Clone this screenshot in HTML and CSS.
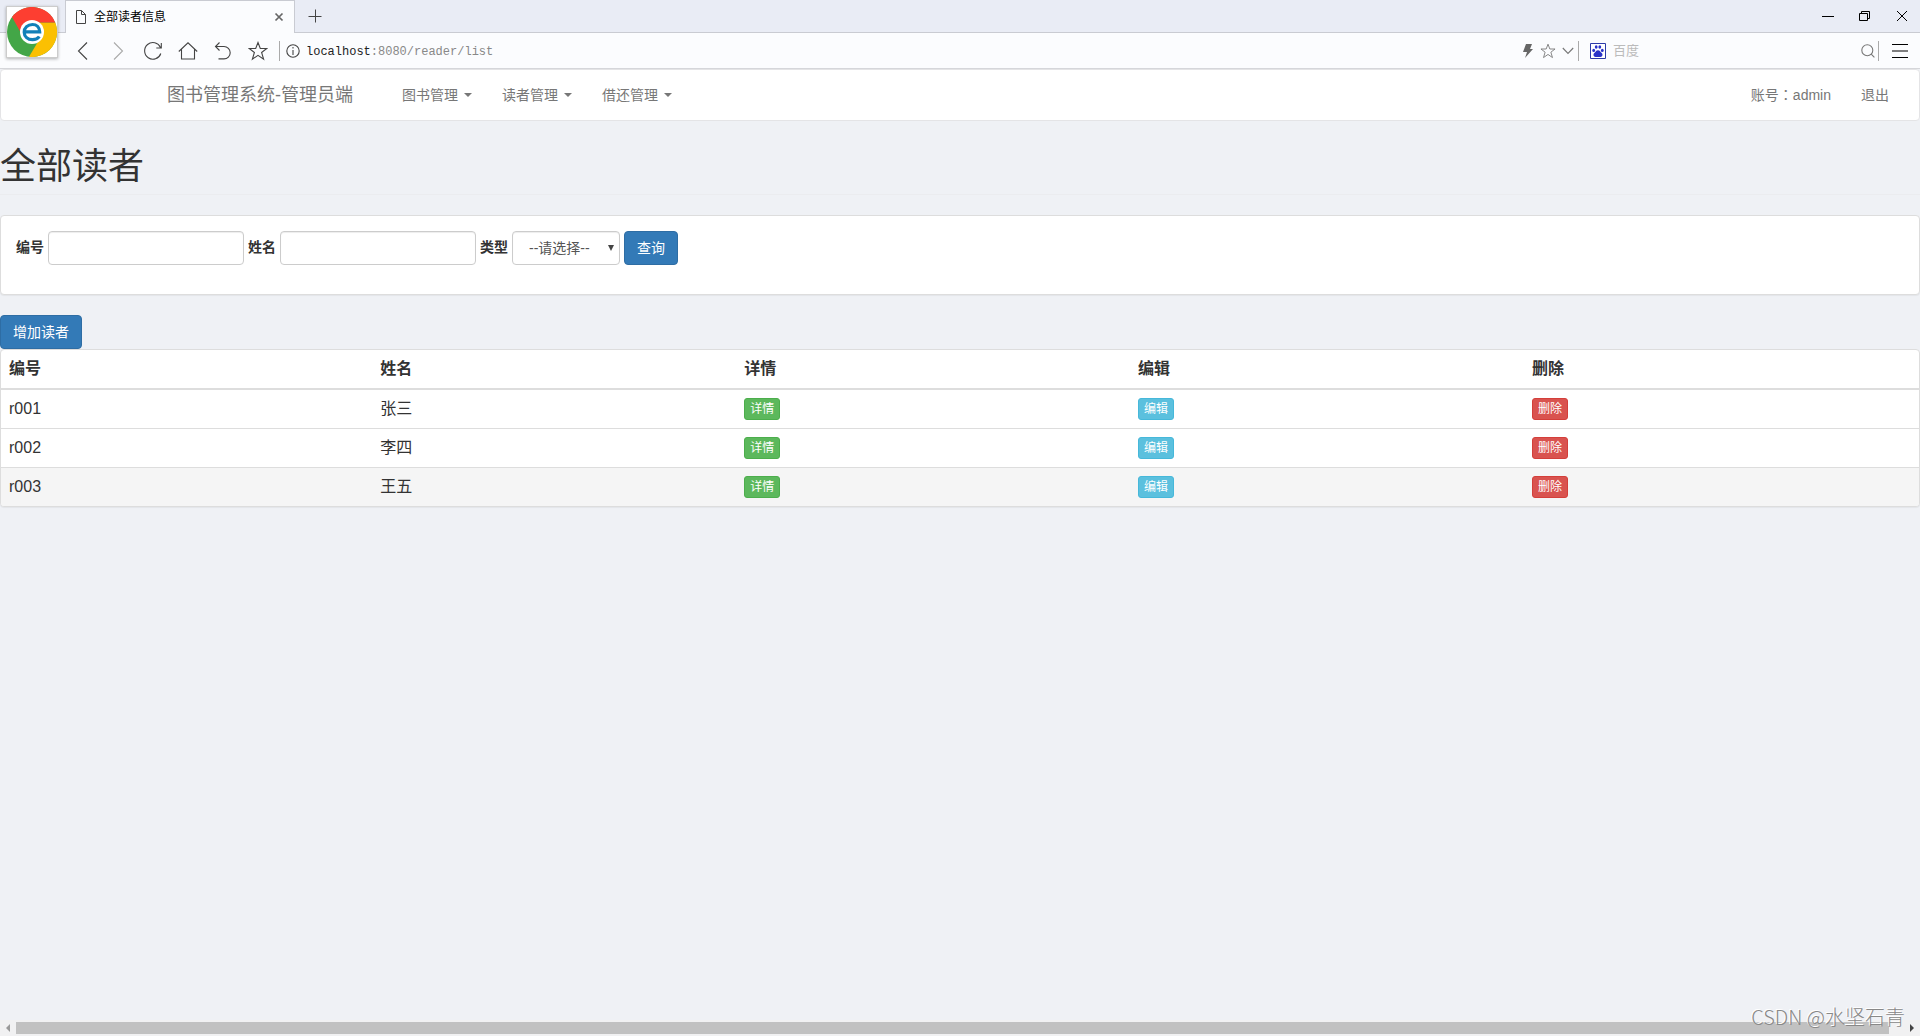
FILE: index.html
```html
<!DOCTYPE html>
<html lang="zh-CN">
<head>
<meta charset="utf-8">
<title>全部读者信息</title>
<link rel="stylesheet" href="styles.css">
</head>
<body>
<header class="browser">
  <div class="tab-strip">
    <div class="tab">
      <svg class="tab-page" width="10" height="14" viewBox="0 0 10 14"><path d="M.5.5h5l4 4v9h-9zM5.500.5v4h4"/></svg>
      <span class="tab-title">全部读者信息</span>
      <button class="tab-close" aria-label="关闭标签"><svg width="10" height="10" viewBox="0 0 10 10"><path d="M1.500 1.500l7 7M8.500 1.500l-7 7"/></svg></button>
    </div>
    <button class="tab-new" aria-label="新标签"><svg width="14" height="14" viewBox="0 0 14 14"><path d="M.5 7.500h13M7.500.5v13"/></svg></button>
    <div class="window-buttons">
      <button aria-label="最小化"><svg width="14" height="14" viewBox="0 0 14 14"><path d="M1 7.500h12"/></svg></button>
      <button aria-label="还原"><svg width="14" height="14" viewBox="0 0 14 14"><path d="M1.500 4.500h8v7h-8zM3.500 4V2.500h8v7H10"/></svg></button>
      <button aria-label="关闭"><svg width="14" height="14" viewBox="0 0 14 14"><path d="M2 2l10 10M12 2L2 12"/></svg></button>
    </div>
  </div>
  <div class="toolbar">
    <div class="tools">
      <button aria-label="后退"><svg width="20" height="20" viewBox="0 0 20 20"><path d="M14 1.500L5.500 10l8.500 8.500"/></svg></button>
      <button class="faded" aria-label="前进"><svg width="20" height="20" viewBox="0 0 20 20"><path d="M6 1.500l8.500 8.500L6 18.500"/></svg></button>
      <button aria-label="刷新"><svg width="20" height="20" viewBox="0 0 20 20"><path d="M17.800 12.500A8.300 8.300 0 1 1 17.500 6.500M18.300 2v5h-5"/></svg></button>
      <button aria-label="主页"><svg width="20" height="20" viewBox="0 0 20 20"><path d="M.8 10.500L10 1.800l9.200 8.700M3.500 8.500v9.500h13V8.500"/></svg></button>
      <button aria-label="恢复"><svg width="20" height="20" viewBox="0 0 20 20"><path d="M6.500 1.500L2.500 5.500l4 4M2.500 5.500h8.500a6.200 6.200 0 0 1 0 12.400H5.500"/></svg></button>
      <button aria-label="收藏"><svg width="20" height="20" viewBox="0 0 20 20"><path d="M10 1.500l2.300 6h6.500l-5.200 4 2 6.700L10 14.300l-5.600 3.900 2-6.700-5.200-4h6.500z"/></svg></button>
    </div>
    <div class="address">
      <svg width="14" height="14" viewBox="0 0 14 14"><circle cx="7" cy="7" r="6.200"/><path d="M7 6v5M7 3v1.600"/></svg>
      <div class="url">localhost<span class="url-path">:8080/reader/list</span></div>
    </div>
    <div class="address-tools">
      <button aria-label="极速模式"><svg class="bolt" width="10" height="14" viewBox="0 0 10 14"><path d="M3 0h6L7 5h3L2 14l2-6H0z"/></svg></button>
      <button aria-label="收藏网页"><svg width="16" height="16" viewBox="0 0 20 20"><path d="M10 1.500l2.300 6h6.500l-5.200 4 2 6.700L10 14.300l-5.600 3.900 2-6.700-5.200-4h6.500z"/></svg></button>
      <button aria-label="展开"><svg width="12" height="8" viewBox="0 0 12 8"><path d="M.8 1L6 6.500 11.200 1"/></svg></button>
    </div>
    <div class="search">
      <svg class="paw" width="16" height="16" viewBox="0 0 16 16"><path class="paw-frame" d="M.5.5h15v15H.5z"/><ellipse cx="3.700" cy="7.400" rx="1.400" ry="1.700"/><ellipse cx="6.200" cy="4" rx="1.400" ry="1.800"/><ellipse cx="9.800" cy="4" rx="1.400" ry="1.800"/><ellipse cx="12.300" cy="7.400" rx="1.400" ry="1.700"/><path d="M8 7.200c2 0 2.300 1.800 3.700 2.900 1.500 1.300.8 3.900-1.200 3.900H5.500c-2 0-2.700-2.600-1.200-3.900C5.700 9 6 7.200 8 7.200z"/></svg>
      <input class="search-box" type="text" placeholder="百度" aria-label="搜索">
      <button aria-label="搜索"><svg width="14" height="14" viewBox="0 0 14 14"><circle cx="6.300" cy="6.300" r="5.500"/><path d="M10.200 10.200l3.200 3.200"/></svg></button>
    </div>
    <button class="menu" aria-label="菜单"><svg width="16" height="14" viewBox="0 0 16 14"><path d="M0 .5h16M0 7h16M0 13.500h16"/></svg></button>
  </div>
  <div class="logo">
    <svg width="50" height="50" viewBox="0 0 50 50">
      <circle cx="25" cy="25" r="25" fill="#43a647"/>
      <path d="M25 25L27 15.500H48.200A25 25 0 0 1 22 49.800L32 33z" fill="#fbc002"/>
      <path d="M25 25L14 26 5 10A25 25 0 0 1 48.200 15.500H27z" fill="#fd3e31"/>
      <circle cx="25" cy="25" r="12" fill="#fff"/>
      <path class="logo-mark" d="M17 24.800h15.700C32.500 20 29.500 17.500 25.500 17.500c-4.800 0-8.300 3.300-8.300 7.700s3.500 7.500 8.300 7.500c3 0 5.500-1.200 6.800-3.200"/>
    </svg>
  </div>
</header>

<nav class="navbar">
  <a class="brand" href="#">图书管理系统-管理员端</a>
  <div class="nav-menu">
    <a href="#">图书管理<span class="caret"></span></a>
    <a href="#">读者管理<span class="caret"></span></a>
    <a href="#">借还管理<span class="caret"></span></a>
  </div>
  <div class="nav-user">
    <a href="#"><span>账号<span class="colon" lang="zh-TW">：</span>admin</span></a>
    <a href="#">退出</a>
  </div>
</nav>

<main class="page">
  <h1 class="page-title">全部读者</h1>
  <form class="panel filter">
    <label for="reader-id">编号</label>
    <input class="field" id="reader-id" type="text">
    <label for="reader-name">姓名</label>
    <input class="field" id="reader-name" type="text">
    <label for="reader-type">类型</label>
    <div class="select-wrap">
      <select class="field" id="reader-type"><option>--请选择--</option></select>
    </div>
    <button class="btn btn-primary" type="button">查询</button>
  </form>
  <button class="btn btn-primary" type="button">增加读者</button>
  <div class="panel list">
    <table class="readers">
      <colgroup><col class="col-id"><col class="col-name"><col class="col-action"><col class="col-action"><col></colgroup>
      <thead>
        <tr><th>编号</th><th>姓名</th><th>详情</th><th>编辑</th><th>删除</th></tr>
      </thead>
      <tbody>
        <tr><td>r001</td><td>张三</td><td><button class="btn btn-xs btn-success">详情</button></td><td><button class="btn btn-xs btn-info">编辑</button></td><td><button class="btn btn-xs btn-danger">删除</button></td></tr>
        <tr><td>r002</td><td>李四</td><td><button class="btn btn-xs btn-success">详情</button></td><td><button class="btn btn-xs btn-info">编辑</button></td><td><button class="btn btn-xs btn-danger">删除</button></td></tr>
        <tr class="active"><td>r003</td><td>王五</td><td><button class="btn btn-xs btn-success">详情</button></td><td><button class="btn btn-xs btn-info">编辑</button></td><td><button class="btn btn-xs btn-danger">删除</button></td></tr>
      </tbody>
    </table>
  </div>
</main>

<div class="scrollbar">
  <svg class="arrow-left" width="4" height="8" viewBox="0 0 4 8"><path d="M4 0v8L0 4z"/></svg>
  <div class="thumb"></div>
  <svg class="arrow-right" width="4" height="8" viewBox="0 0 4 8"><path d="M0 0v8l4-4z"/></svg>
</div>
<div class="watermark">CSDN @水坚石青</div>
</body>
</html>
```
FILE: styles.css
```css
* { box-sizing: border-box; }

body {
  margin: 0;
  min-height: 100vh;
  display: flex;
  flex-direction: column;
  position: relative;
  background: #eff1f5;
  color: #333;
  font: 14px/20px "Liberation Sans", "Noto Sans CJK SC", sans-serif;
}

button, input, select { font: inherit; color: inherit; }
a { color: inherit; text-decoration: none; }
svg { display: block; flex: none; fill: none; stroke: #444; stroke-width: 1.1; }

/* Browser window */
.browser { position: relative; }
.browser button {
  display: flex;
  align-items: center;
  justify-content: center;
  padding: 0;
  border: 0;
  background: none;
}

.tab-strip {
  display: flex;
  height: 33px;
  padding-left: 65px;
  background: #e9ecf5;
  border-bottom: 1px solid #c9cbd2;
}
.tab {
  display: flex;
  align-items: center;
  width: 230px;
  height: 33px;
  padding: 0 10px;
  background: #fbfcfe;
  border: 1px solid #c9cbd2;
  border-bottom: 0;
}
.tab-page { stroke-width: 1; }
.tab-title {
  flex: 1;
  padding-left: 8px;
  color: #000;
  font-size: 12px;
}
.tab-close svg { stroke: #666; stroke-width: 1.7; }
.tab-new { width: 39px; }
.tab-new svg { stroke-width: 1; }
.window-buttons {
  display: flex;
  margin-left: auto;
}
.window-buttons button { width: 37px; }
.window-buttons svg { stroke: #000; stroke-width: 1; }

.toolbar {
  display: flex;
  align-items: center;
  height: 36px;
  padding-left: 65px;
  background: #fbfcfe;
  border-bottom: 1px solid #d5d6da;
}
.tools { display: flex; }
.tools button { width: 35px; }
.tools .faded svg { stroke: #aaa; }
.address {
  display: flex;
  flex: 1;
  align-items: center;
  gap: 6px;
  height: 20px;
  margin-left: 4px;
  padding-left: 6px;
  border-left: 1px solid #aaa;
}
.url {
  color: #222;
  font-family: "Liberation Mono", monospace;
  font-size: 12px;
  line-height: 16px;
  padding-top: 2px;
}
.url-path { color: #888; }
.address-tools {
  display: flex;
  align-items: center;
  height: 20px;
  border-right: 1px solid #aaa;
}
.address-tools button { width: 20px; }
.address-tools svg { stroke: #777; }
.address-tools .bolt { fill: #666; stroke: none; }
.search {
  display: flex;
  align-items: center;
  width: 300px;
  height: 20px;
  padding-left: 11px;
  border-right: 1px solid #aaa;
}
.search-box {
  flex: 1;
  min-width: 0;
  padding: 0 7px;
  border: 0;
  background: none;
  font-size: 13px;
}
.search-box::placeholder { color: #bbb; }
.search button { width: 20px; }
.search button svg { stroke: #777; }
.search .paw { fill: #2932c8; stroke: none; }
.search .paw-frame { fill: #fff; stroke: #2c3aa8; stroke-width: 1; }
.menu { width: 41px; }
.menu svg { stroke: #000; stroke-width: 1; }

.logo {
  position: absolute;
  top: 6px;
  left: 6px;
  background: #fff;
  border: 1px solid #ccc;
  box-shadow: 0 1px 3px rgba(0, 0, 0, .3);
}
.logo svg { stroke: none; }
.logo-mark { stroke: #1280b8; stroke-width: 3.2; }

/* Navigation */
.navbar {
  display: flex;
  align-items: center;
  min-height: 52px;
  padding-left: 166px;
  background: #fff;
  border: 1px solid #e4e4e6;
  border-radius: 4px;
  color: #777;
}
.brand { font-size: 18px; }
.nav-menu {
  display: flex;
  padding-left: 34px;
}
.nav-menu a, .nav-user a {
  display: flex;
  align-items: center;
  gap: 6px;
  padding: 15px;
}
.caret {
  border: 4px solid transparent;
  border-top-color: #777;
  border-bottom: 0;
}
.nav-user {
  display: flex;
  margin-left: auto;
  padding-right: 15px;
}
.colon {
  font-family: "Noto Sans CJK TC", sans-serif;
  line-height: 14px;
}

/* Content */
.page { flex: 1; }
.page-title {
  margin: 26px 0 20px;
  padding-bottom: 7px;
  border-bottom: 1px solid #ebecef;
  font-size: 36px;
  font-weight: 400;
  line-height: 40px;
}
.panel {
  background: #fff;
  border: 1px solid #ddd;
  border-radius: 4px;
  box-shadow: 0 1px 1px rgba(0, 0, 0, .05);
}
.filter {
  display: flex;
  align-items: flex-start;
  gap: 4px;
  min-height: 80px;
  margin-bottom: 20px;
  padding: 15px;
}
.filter label {
  font-weight: 700;
  line-height: 32px;
}
.field {
  width: 196px;
  height: 34px;
  padding: 6px 12px;
  background: #fff;
  border: 1px solid #ccc;
  border-radius: 4px;
  box-shadow: inset 0 1px 1px rgba(0, 0, 0, .075);
  color: #555;
}
.select-wrap { position: relative; }
.select-wrap .field {
  display: block;
  width: 108px;
  padding: 6px 16px;
  appearance: none;
}
.select-wrap::after {
  content: "";
  position: absolute;
  top: 14px;
  right: 6px;
  border: 3px solid transparent;
  border-top: 6px solid #444;
  border-bottom: 0;
  pointer-events: none;
}

.btn {
  display: block;
  padding: 6px 12px;
  border: 1px solid;
  border-radius: 4px;
  color: #fff;
}
.btn-primary { background: #337ab7; border-color: #2e6da4; }
.btn-success { background: #5cb85c; border-color: #4cae4c; }
.btn-info { background: #5bc0de; border-color: #46b8da; }
.btn-danger { background: #d9534f; border-color: #d43f3a; }
.btn-xs {
  padding: 1px 5px;
  border-radius: 3px;
  font-size: 12px;
  line-height: 18px;
}

.list { overflow: hidden; }
.readers {
  width: 100%;
  table-layout: fixed;
  border-spacing: 0;
  font-size: 16px;
}
.col-id { width: 19.350%; }
.col-name { width: 18.980%; }
.col-action { width: 20.540%; }
.readers th, .readers td {
  height: 39px;
  padding: 0 8px;
  border-top: 1px solid #ddd;
  text-align: left;
}
.readers th {
  height: 40px;
  border-top: 0;
  border-bottom: 2px solid #ddd;
}
.readers tbody tr:first-child td { height: 38px; border-top: 0; }
.readers .active { background: #f5f5f5; }

/* Window scrollbar */
.scrollbar {
  display: flex;
  align-items: center;
  gap: 6px;
  height: 16px;
  padding: 0 6px;
  background: #f1f1f2;
}
.scrollbar svg { fill: #999; stroke: none; }
.scrollbar .arrow-right { margin-left: 15px; fill: #444; }
.thumb {
  flex: 1;
  height: 12px;
  background: #c1c1c1;
}
.watermark {
  position: absolute;
  right: 15px;
  bottom: 7px;
  color: #888;
  font: 300 20px/24px "Noto Sans CJK SC", sans-serif;
  text-shadow: -1px -1px 0 #fff;
}
```
